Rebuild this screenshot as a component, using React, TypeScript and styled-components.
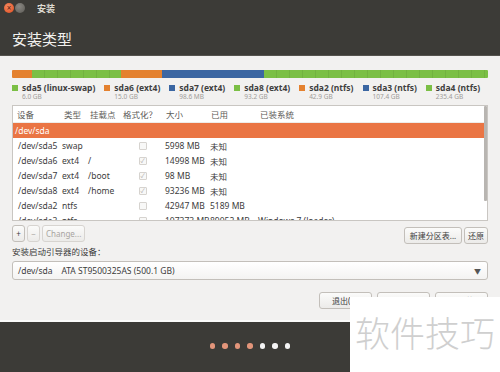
import React from "react";
import styled, { createGlobalStyle } from "styled-components";

const GlobalStyle = createGlobalStyle`
  html, body { margin: 0; padding: 0; width: 500px; height: 372px; overflow: hidden; }
  body { font-family: "Noto Sans", "Noto Sans CJK SC", sans-serif; }
  * { box-sizing: border-box; }
`;

const ORANGE = "#e4812f";
const GREEN = "#7bbf45";
const BLUE = "#3b66a2";
const COLS = "47px 26px 33px 43px 45px 49px 1fr";

const Window = styled.div`
  position: relative;
  width: 500px;
  height: 372px;
  display: flex;
  flex-direction: column;
  background: #f2f1f0;
  overflow: hidden;
`;

const Header = styled.header`
  height: 56px;
  flex: none;
  background: #3c3b37;
  display: flex;
  flex-direction: column;
  border-bottom: 1px solid #55534e;
`;

const TitleBar = styled.div`
  height: 16px;
  display: flex;
  align-items: center;
  padding: 0 0 0 4px;
  gap: 1px;
`;

const WinButton = styled.span<{ $close?: boolean }>`
  width: 10px;
  height: 10px;
  border-radius: 50%;
  display: flex;
  align-items: center;
  justify-content: center;
  font-size: 8px;
  line-height: 1;
  color: #5a2010;
  background: ${(p) =>
    p.$close
      ? "radial-gradient(circle at 40% 35%, #f48a62, #df4b1d)"
      : "radial-gradient(circle at 40% 35%, #8a8883, #5d5b56)"};
`;

const WinTitle = styled.span`
  margin-left: 11px;
  color: #dfdbd2;
  font-size: 9px;
  font-weight: 700;
`;

const PageTitle = styled.h1`
  margin: 0;
  padding: 14px 0 0 12px;
  color: #f2f1ee;
  font-size: 15px;
  font-weight: 400;
  line-height: 18px;
`;

const Body = styled.main`
  flex: 1;
  display: flex;
  flex-direction: column;
  padding: 14px 12px 0 12px;
`;

const PartBar = styled.div`
  height: 8px;
  display: flex;
  border-radius: 1px;
  overflow: hidden;
`;

const Segment = styled.div<{ $c: string }>`
  height: 100%;
  background: ${(p) =>
    p.$c === GREEN
      ? `repeating-linear-gradient(90deg, transparent 0 12px, rgba(0,0,0,0.07) 12px 13px), ${p.$c}`
      : p.$c};
`;

const Legend = styled.div`
  display: flex;
  margin-top: 5px;
  gap: 9px;
`;

const LegendItem = styled.div`
  display: flex;
  gap: 4px;
`;

const Swatch = styled.span<{ $c: string }>`
  width: 6px;
  height: 6px;
  margin-top: 2px;
  background: ${(p) => p.$c};
  flex: none;
`;

const LegendText = styled.div`
  display: flex;
  flex-direction: column;
`;

const LegendName = styled.span`
  font-size: 8.5px;
  font-weight: 700;
  color: #3f3f3f;
  line-height: 10px;
  white-space: nowrap;
`;

const LegendSize = styled.span`
  font-size: 6.5px;
  color: #a09c98;
  line-height: 8px;
`;

const TableFrame = styled.div`
  margin-top: 4px;
  height: 116px;
  flex: none;
  border: 1px solid #c9c6c2;
  background: #fff;
  display: flex;
  overflow: hidden;
`;

const TableBody = styled.div`
  flex: 1;
  display: flex;
  flex-direction: column;
`;

const Scroll = styled.div`
  width: 3px;
  display: flex;
  flex-direction: column;
`;

const Thumb = styled.div`
  height: 83%;
  background: #b8b5b1;
  border-radius: 1px;
`;

const HeadRow = styled.div`
  display: grid;
  grid-template-columns: ${COLS};
  height: 17px;
  flex: none;
  align-items: center;
  border-bottom: 1px solid #eeece9;
  font-size: 8.5px;
  color: #5d5b58;
`;

const Row = styled.div<{ $selected?: boolean }>`
  display: grid;
  grid-template-columns: ${COLS};
  height: 15px;
  flex: none;
  align-items: center;
  font-size: 8.5px;
  color: ${(p) => (p.$selected ? "#fff" : "#3c3c3c")};
  background: ${(p) => (p.$selected ? "#ea7544" : "transparent")};
`;

const Cell = styled.span<{ $pad?: number; $center?: boolean }>`
  padding-left: ${(p) => p.$pad ?? 4}px;
  white-space: nowrap;
  display: flex;
  justify-content: ${(p) => (p.$center ? "center" : "flex-start")};
`;

const Check = styled.span`
  width: 8px;
  height: 8px;
  border: 1px solid #d6d3cf;
  border-radius: 1px;
  background: #f8f8f7;
  display: flex;
  align-items: center;
  justify-content: center;
  font-size: 6px;
  line-height: 1;
  color: #a9a6a2;
`;

const ActionRow = styled.div`
  margin-top: 4px;
  display: flex;
  justify-content: space-between;
  align-items: flex-start;
`;

const Group = styled.div`
  display: flex;
  gap: 2px;
`;

const Button = styled.button<{ $w?: number; $disabled?: boolean }>`
  height: 17px;
  min-width: ${(p) => p.$w ?? 13}px;
  padding: 0 3px;
  border: 1px solid ${(p) => (p.$disabled ? "#d7d4d0" : "#c3bfba")};
  border-radius: 3px;
  background: linear-gradient(#fbfbfa, #ecebe9);
  color: ${(p) => (p.$disabled ? "#a8a5a1" : "#3c3c3c")};
  font-family: "Noto Sans", "Noto Sans CJK SC", sans-serif;
  font-size: 8px;
  display: flex;
  align-items: center;
  justify-content: center;
`;

const RightGroup = styled(Group)`
  margin-top: 2px;
`;

const Label = styled.div`
  margin-top: 2px;
  font-size: 8.5px;
  color: #3c3c3c;
  line-height: 12px;
`;

const Combo = styled.div`
  margin-top: 3px;
  height: 19px;
  border: 1px solid #c3bfba;
  border-radius: 3px;
  background: linear-gradient(#ffffff, #f4f3f2);
  display: flex;
  align-items: center;
  justify-content: space-between;
  padding: 0 6px 0 5px;
  font-size: 8.5px;
  color: #3c3c3c;
`;

const Arrow = styled.span`
  font-size: 7px;
  color: #555;
`;

const NavRow = styled.div`
  margin-top: 12px;
  display: flex;
  justify-content: flex-end;
  gap: 5px;
`;

const NavButton = styled(Button)`
  width: 53px;
  font-size: 8px;
`;

const Footer = styled.footer`
  height: 52px;
  flex: none;
  border-top: 2px solid #fbfbfa;
  background: #3c3b37;
  display: flex;
  align-items: center;
  justify-content: center;
  gap: 7px;
  padding-bottom: 2px;
`;

const Dot = styled.span<{ $on?: boolean }>`
  width: 5.5px;
  height: 5.5px;
  border-radius: 50%;
  background: ${(p) => (p.$on ? "#e3957a" : "#f4f4f4")};
`;

const Watermark = styled.div`
  position: absolute;
  left: 350px;
  top: 297px;
  width: 150px;
  height: 75px;
  background: #fff;
  display: flex;
  align-items: center;
  padding: 0 0 6px 5px;
  font-family: "Noto Sans CJK SC", sans-serif;
  font-size: 35px;
  font-weight: 300;
  line-height: 40px;
  color: #cfcfcf;
`;

const segments = [
  { w: 20, c: ORANGE },
  { w: 89, c: GREEN },
  { w: 41, c: ORANGE },
  { w: 102, c: BLUE },
  { w: 224, c: GREEN },
];

const legend = [
  { n: "sda5 (linux-swap)", s: "6.0 GB", c: GREEN },
  { n: "sda6 (ext4)", s: "15.0 GB", c: ORANGE },
  { n: "sda7 (ext4)", s: "98.6 MB", c: BLUE },
  { n: "sda8 (ext4)", s: "93.2 GB", c: GREEN },
  { n: "sda2 (ntfs)", s: "42.9 GB", c: ORANGE },
  { n: "sda3 (ntfs)", s: "107.4 GB", c: BLUE },
  { n: "sda4 (ntfs)", s: "235.4 GB", c: GREEN },
];

const rows: [string, string, string, boolean, string, string, string][] = [
  ["/dev/sda5", "swap", "", false, "5998 MB", "未知", ""],
  ["/dev/sda6", "ext4", "/", true, "14998 MB", "未知", ""],
  ["/dev/sda7", "ext4", "/boot", true, "98 MB", "未知", ""],
  ["/dev/sda8", "ext4", "/home", true, "93236 MB", "未知", ""],
  ["/dev/sda2", "ntfs", "", false, "42947 MB", "5189 MB", ""],
  ["/dev/sda3", "ntfs", "", false, "107373 MB", "89052 MB", "Windows 7 (loader)"],
];

const headers = ["设备", "类型", "挂载点", "格式化？", "大小", "已用", "已装系统"];

export default function App() {
  return (
    <Window>
      <GlobalStyle />
      <Header>
        <TitleBar>
          <WinButton $close>×</WinButton>
          <WinButton />
          <WinTitle>安装</WinTitle>
        </TitleBar>
        <PageTitle>安装类型</PageTitle>
      </Header>
      <Body>
        <PartBar>
          {segments.map((s, i) => (
            <Segment key={i} $c={s.c} style={{ width: s.w }} />
          ))}
        </PartBar>
        <Legend>
          {legend.map((l) => (
            <LegendItem key={l.n}>
              <Swatch $c={l.c} />
              <LegendText>
                <LegendName>{l.n}</LegendName>
                <LegendSize>{l.s}</LegendSize>
              </LegendText>
            </LegendItem>
          ))}
        </Legend>
        <TableFrame>
          <TableBody>
            <HeadRow>
              {headers.map((h) => (
                <Cell key={h}>{h}</Cell>
              ))}
            </HeadRow>
            <Row $selected>
              <Cell $pad={2}>/dev/sda</Cell>
            </Row>
            {rows.map((r) => (
              <Row key={r[0]}>
                <Cell $pad={5}>{r[0]}</Cell>
                <Cell $pad={2}>{r[1]}</Cell>
                <Cell $pad={2}>{r[2]}</Cell>
                <Cell $center>
                  <Check>{r[3] ? "✓" : ""}</Check>
                </Cell>
                <Cell $pad={3}>{r[4]}</Cell>
                <Cell $pad={3}>{r[5]}</Cell>
                <Cell $pad={2}>{r[6]}</Cell>
              </Row>
            ))}
          </TableBody>
          <Scroll>
            <Thumb />
          </Scroll>
        </TableFrame>
        <ActionRow>
          <Group>
            <Button>+</Button>
            <Button $disabled>−</Button>
            <Button $disabled $w={40}>Change...</Button>
          </Group>
          <RightGroup>
            <Button $w={58}>新建分区表...</Button>
            <Button $w={24}>还原</Button>
          </RightGroup>
        </ActionRow>
        <Label>安装启动引导器的设备：</Label>
        <Combo>
          <span>/dev/sda&nbsp;&nbsp;&nbsp;&nbsp;ATA ST9500325AS (500.1 GB)</span>
          <Arrow>▼</Arrow>
        </Combo>
        <NavRow>
          <NavButton>退出(Q)</NavButton>
          <NavButton>后退(B)</NavButton>
          <NavButton>现在安装(I)</NavButton>
        </NavRow>
      </Body>
      <Footer>
        <Dot $on />
        <Dot $on />
        <Dot $on />
        <Dot $on />
        <Dot />
        <Dot />
        <Dot />
      </Footer>
      <Watermark>软件技巧</Watermark>
    </Window>
  );
}
